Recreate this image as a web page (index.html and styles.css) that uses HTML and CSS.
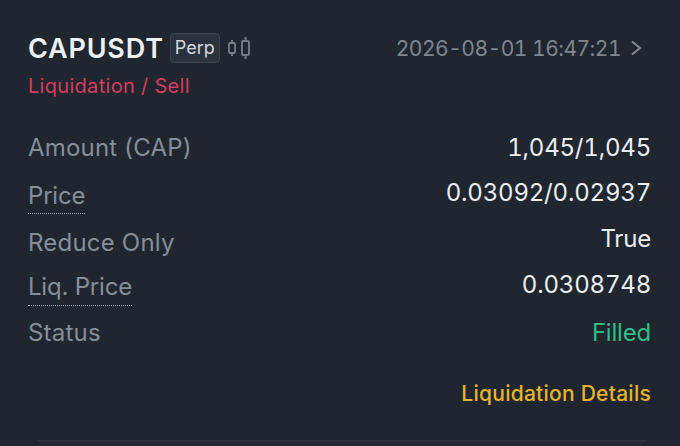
FILE: index.html
```html
<!DOCTYPE html>
<html>
	<head>
		<meta charset="UTF-8">
		<title>CAPUSDT</title>
		<link rel="stylesheet" href="styles.css">
	</head>
	<body>
		<div class="card">
			<div class="head">
				<div class="symbol">
					<span class="name">CAPUSDT</span>
					<span class="tag">Perp</span>
					<svg class="candle" width="24" height="26" viewBox="0 0 24 26" fill="none" stroke="#6f7883" stroke-width="2">
						<rect x="2" y="8" width="6" height="10" rx="1"/>
						<path d="M5 5v3M5 18v3"/>
						<rect x="15" y="6" width="7" height="14" rx="1"/>
						<path d="M18.500 2v4M18.500 20v4"/>
					</svg>
				</div>
				<div class="time">
					<span>2026-08-01 16:47:21</span>
					<svg class="arrow" width="12" height="16" viewBox="0 0 12 16" fill="none" stroke="#868d96" stroke-width="2">
						<path d="M2 1.500l8 6.500-8 6.500"/>
					</svg>
				</div>
			</div>
			<div class="side">Liquidation / Sell</div>

			<div class="list">
				<div class="row">
					<span class="label">Amount (CAP)</span>
					<span class="value">1,045/1,045</span>
				</div>
				<div class="row">
					<span class="label dotted">Price</span>
					<span class="value up">0.03092/0.02937</span>
				</div>
				<div class="row">
					<span class="label low">Reduce Only</span>
					<span class="value up">True</span>
				</div>
				<div class="row">
					<span class="label dotted liq">Liq. Price</span>
					<span class="value up">0.0308748</span>
				</div>
				<div class="row">
					<span class="label status">Status</span>
					<span class="value green">Filled</span>
				</div>
			</div>

			<div class="foot"><a class="details" href="javascript:;">Liquidation Details</a></div>
			<div class="line"></div>
		</div>
	</body>
</html>
```

FILE: styles.css
```css
*{
	margin: 0;
	padding: 0;
	box-sizing: border-box;
}

body{
	background-color: #1f2630;
	font-family: "Inter", "Liberation Sans", sans-serif;
	overflow: hidden;
}

.card{
	height: 446px;
	padding: 29px 29px 0 28px;
}

.head{
	display: flex;
	justify-content: space-between;
	align-items: center;
	height: 38px;
}

.symbol{
	display: flex;
	align-items: center;
}

.name{
	font-size: 27px;
	font-weight: 600;
	letter-spacing: 0.8px;
	color: #eef0f3;
}

.tag{
	margin-left: 6px;
	padding: 0 4px;
	height: 30px;
	line-height: 27px;
	font-size: 18px;
	color: #d5d9de;
	background-color: #2a323e;
	border: 1px solid #3a434f;
	border-radius: 4px;
}

.candle{
	margin-left: 7px;
}

.time{
	display: flex;
	align-items: center;
	font-size: 21px;
	font-variant-numeric: tabular-nums;
	color: #7f8791;
	letter-spacing: -0.5px;
}

.arrow{
	margin-left: 9px;
	margin-right: 9px;
}

.side{
	margin-top: 6px;
	font-size: 20px;
	line-height: 26px;
	letter-spacing: 0.3px;
	color: #d43d5e;
}

.list{
	margin-top: 33px;
}

.row{
	display: flex;
	justify-content: space-between;
	align-items: flex-start;
	height: 46px;
	font-size: 24px;
	line-height: 32px;
}

.label{
	color: #868e98;
	letter-spacing: 0.2px;
}

.dotted{
	border-bottom: 1px dotted #a5abb3;
	padding-bottom: 1px;
	margin-top: 2px;
	letter-spacing: -0.2px;
}

.low{
	margin-top: 3px;
}

.liq{
	margin-top: 1px;
	padding-bottom: 2px;
}

.status{
	margin-top: 1px;
}

.value{
	color: #eceef1;
	font-variant-numeric: tabular-nums;
	letter-spacing: -0.2px;
}

.up{
	margin-top: -1px;
}

.green{
	margin-top: 1px;
	color: #2ebd85;
}

.foot{
	display: flex;
	justify-content: flex-end;
	margin-top: 18px;
}

.details{
	font-size: 21px;
	line-height: 28px;
	font-weight: 500;
	letter-spacing: 0.25px;
	color: #e8b426;
	text-decoration: none;
}

.line{
	margin: 32px 5px 0 9px;
	border-top: 2px solid #2b323d;
}
```
